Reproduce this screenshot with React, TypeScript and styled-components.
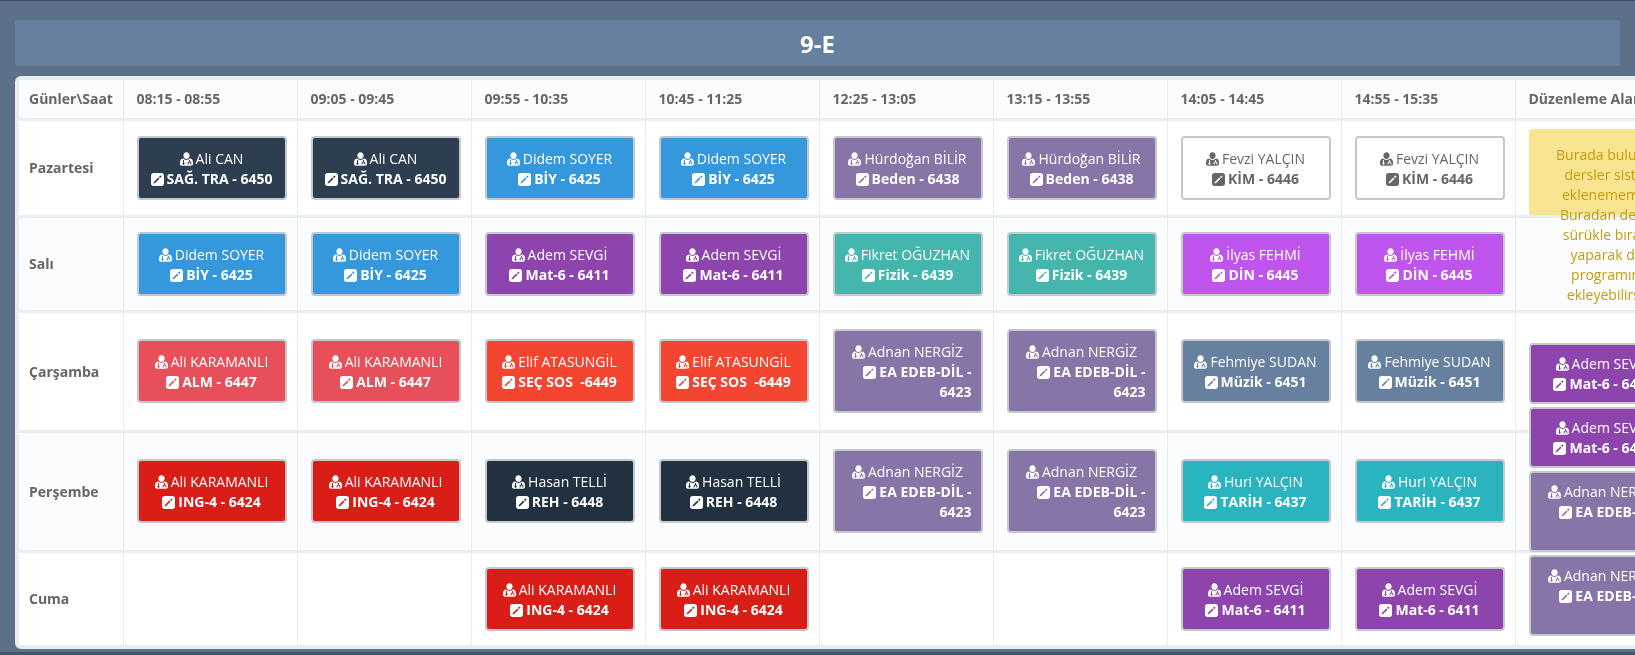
import React from "react";
import styled, { createGlobalStyle } from "styled-components";

const Global = createGlobalStyle`
  html, body { margin: 0; padding: 0; height: 100%; overflow: hidden; }
  body { background: #5c7089; font-family: "Open Sans", "Liberation Sans", sans-serif; }
`;

const Page = styled.div`
  box-sizing: border-box;
  width: 1635px;
  height: 655px;
  padding: 20px 0 0 15px;
  overflow: hidden;
  background: #5c7089;
  border-top: 1px solid #3f4f63;
  border-bottom: 3px solid #44566b;
  filter: blur(0.35px);
`;

const Heading = styled.h1`
  box-sizing: border-box;
  width: 1605px;
  height: 46px;
  margin: -1px 0 10px;
  padding-top: 1px;
  background: #67809f;
  border-radius: 3px;
  color: #fff;
  font-size: 24px;
  line-height: 46px;
  font-weight: 700;
  text-align: center;
`;

const Panel = styled.div`
  box-sizing: border-box;
  width: 1700px;
  border: 4px solid #e7ecf1;
  border-radius: 6px;
  background: #fff;
`;

const Table = styled.table`
  table-layout: fixed;
  width: 1690px;
  border-collapse: collapse;
  color: #666;
  font-size: 14px;
`;

const HeadCell = styled.th<{ $first?: boolean }>`
  box-sizing: border-box;
  height: 39px;
  padding: 0 0 0 ${(p) => (p.$first ? 10 : 13)}px;
  background: #fbfcfd;
  border-left: ${(p) => (p.$first ? 0 : 1)}px solid #e7ecf1;
  border-bottom: 3px solid #e7ecf1;
  text-align: left;
  white-space: nowrap;
  overflow: hidden;
  font-weight: 700;
`;

const Row = styled.tr<{ $height: number; $striped?: boolean; $last?: boolean }>`
  height: ${(p) => p.$height}px;
  & > td {
    background: ${(p) => (p.$striped ? "#fbfcfd" : "transparent")};
    ${(p) => (p.$last ? "border-bottom: 0;" : "")}
  }
`;

const DayCell = styled.td`
  padding: 0 0 0 10px;
  border-bottom: 3px solid #e7ecf1;
  font-weight: 700;
`;

const Cell = styled.td`
  padding: 0 10px 0 13px;
  border-left: 1px solid #e7ecf1;
  border-bottom: 3px solid #e7ecf1;
  vertical-align: middle;
`;

const NoteCell = styled(Cell)`
  vertical-align: top;
  padding-top: 8px;
`;

const StackCell = styled(Cell)`
  position: relative;
  vertical-align: top;
`;

const FillCell = styled(Cell)`
  padding: 0;
  vertical-align: top;
`;

/* block-level stripe: painted after the note's background, before its text */
const StripeFill = styled.div`
  height: 91px;
  background: #fbfcfd;
`;

const Lesson = styled.div<{ $bg: string; $fg?: string; $dense?: boolean }>`
  box-sizing: border-box;
  width: 150px;
  padding: ${(p) => (p.$dense ? "9.5px 9px 7.5px" : "11px 9px 9px")};
  background: ${(p) => p.$bg};
  border: 2px solid #c4c7cb;
  border-radius: 4px;
  color: ${(p) => p.$fg ?? "#fff"};
  font-size: 14px;
  line-height: 20px;
  text-align: center;
`;

const Name = styled.div`
  white-space: nowrap;
  svg { width: 13px; height: 14px; vertical-align: -2px; margin-right: 3px; }
`;

const Code = styled.div`
  display: inline-block;
  font-weight: 700;
  text-align: right;
  svg { width: 13px; height: 13px; vertical-align: -2px; margin-right: 3px; }
`;

const NoteHolder = styled.div`
  height: 0;
`;

const Note = styled.div`
  box-sizing: border-box;
  width: 172px;
  height: 183px;
  padding: 16px 15px;
  background: #f9e491;
  border-radius: 4px;
  color: #c29d0b;
  font-size: 14px;
  line-height: 20px;
  text-align: center;
  white-space: nowrap;
`;

const Stack = styled.div`
  position: absolute;
  left: 13px;
  top: 30px;
  display: flex;
  flex-direction: column;
  gap: 3px;
`;

const UserMd = () => (
  <svg viewBox="0 0 13 14" fill="currentColor" aria-hidden="true">
    <path d="M6.5 0.2c1.9 0 3.1 1.4 3.1 3.3 0 1.9-1.3 3.5-3.1 3.5S3.4 5.4 3.4 3.5C3.4 1.6 4.6 0.2 6.5 0.2Z" />
    <path
      fillRule="evenodd"
      d="M3.2 6.6c.7.7 1.9 1.3 3.3 1.3s2.6-.6 3.3-1.3c1.8.2 3.2 1.4 3.2 3.6v1.9c0 1-.8 1.7-2 1.7H2c-1.200 0-2-.7-2-1.700v-1.900c0-2.200 1.400-3.400 3.200-3.600ZM3 8.100v2.400a1.100 1.100 0 1 0 1 0V8.100H3Zm6 0v1.500c-.9.2-1.400 1-1.400 2v.9h1v-.9c0-.6.4-1.100.9-1.100s.9.500.9 1.100v.9h1v-.9c0-1-.5-1.800-1.400-2V8.100H9Z"
    />
  </svg>
);

const PenSquare = () => (
  <svg viewBox="0 0 14 14" fill="currentColor" aria-hidden="true">
    <path
      fillRule="evenodd"
      d="M3 0h8a3 3 0 0 1 3 3v8a3 3 0 0 1-3 3H3a3 3 0 0 1-3-3V3a3 3 0 0 1 3-3Zm6.800 2.900L8.600 4.100l1.300 1.300 1.200-1.200a.6.6 0 0 0 0-.8l-.5-.500a.6.6 0 0 0-.8 0ZM7.900 4.800 3.100 9.600 2.700 11.300l1.700-.4 4.800-4.800-1.300-1.300Z"
    />
  </svg>
);

type L = [string, string, string, string?];
const P: Record<string, L> = {
  can: ["Ali CAN", "SAĞ. TRA - 6450", "#2c3e50"],
  didem: ["Didem SOYER", "BİY - 6425", "#3598dc"],
  hurdogan: ["Hürdoğan BİLİR", "Beden - 6438", "#8775a7"],
  fevzi: ["Fevzi YALÇIN", "KİM - 6446", "#ffffff", "#666666"],
  adem: ["Adem SEVGİ", "Mat-6 - 6411", "#8e44ad"],
  fikret: ["Fikret OĞUZHAN", "Fizik - 6439", "#44b6ae"],
  ilyas: ["İlyas FEHMİ", "DİN - 6445", "#bf55ec"],
  alm: ["Ali KARAMANLI", "ALM - 6447", "#e7505a"],
  elif: ["Elif ATASUNGİL", "SEÇ SOS \u00a0-6449", "#f3452f"],
  adnan: ["Adnan NERGİZ", "EA EDEB-DİL - 6423", "#8775a7"],
  fehmiye: ["Fehmiye SUDAN", "Müzik - 6451", "#67809f"],
  ing: ["Ali KARAMANLI", "ING-4 - 6424", "#d91e18"],
  hasan: ["Hasan TELLİ", "REH - 6448", "#22313f"],
  huri: ["Huri YALÇIN", "TARİH - 6437", "#2ab4c0"],
};

const hours = [
  "08:15 - 08:55", "09:05 - 09:45", "09:55 - 10:35", "10:45 - 11:25",
  "12:25 - 13:05", "13:15 - 13:55", "14:05 - 14:45", "14:55 - 15:35",
];

const rows: { day: string; h: number; keys: (string | null)[] }[] = [
  { day: "Pazartesi", h: 97, keys: ["can", "can", "didem", "didem", "hurdogan", "hurdogan", "fevzi", "fevzi"] },
  { day: "Salı", h: 95, keys: ["didem", "didem", "adem", "adem", "fikret", "fikret", "ilyas", "ilyas"] },
  { day: "Çarşamba", h: 120, keys: ["alm", "alm", "elif", "elif", "adnan", "adnan", "fehmiye", "fehmiye"] },
  { day: "Perşembe", h: 120, keys: ["ing", "ing", "hasan", "hasan", "adnan", "adnan", "huri", "huri"] },
  { day: "Cuma", h: 94, keys: [null, null, "ing", "ing", null, null, "adem", "adem"] },
];

const Body = ({ l }: { l: L }) => (
  <>
    <Name><UserMd />{l[0]}</Name>
    <Code><PenSquare />{l[1]}</Code>
  </>
);

export default function App() {
  return (
    <Page>
      <Global />
      <Heading>9-E</Heading>
      <Panel>
        <Table>
          <colgroup>
            <col style={{ width: 104 }} />
            {hours.map((h) => <col key={h} style={{ width: 174 }} />)}
            <col />
          </colgroup>
          <thead>
            <tr>
              <HeadCell $first>Günler\Saat</HeadCell>
              {hours.map((h) => <HeadCell key={h}>{h}</HeadCell>)}
              <HeadCell>Düzenleme Alanı</HeadCell>
            </tr>
          </thead>
          <tbody>
            {rows.map((r, i) => (
              <Row key={r.day} $height={r.h} $striped={i % 2 === 1} $last={i === rows.length - 1}>
                <DayCell>{r.day}</DayCell>
                {r.keys.map((k, j) => (
                  <Cell key={j}>
                    {k && <Lesson $bg={P[k][2]} $fg={P[k][3]}><Body l={P[k]} /></Lesson>}
                  </Cell>
                ))}
                {i === 0 ? (
                  <NoteCell>
                    <NoteHolder>
                      <Note>
                        Burada bulunan e<br />dersler sisteme<br />eklenememiştir.<br />Buradan dersleri<br />sürükle bırak ile<br />yaparak dersi<br />programınıza<br />ekleyebilirsiniz
                      </Note>
                    </NoteHolder>
                  </NoteCell>
                ) : i === 1 ? (
                  <FillCell><StripeFill /></FillCell>
                ) : i === 2 ? (
                  <StackCell>
                    <Stack>
                      <Lesson $dense $bg={P.adem[2]}><Body l={P.adem} /></Lesson>
                      <Lesson $dense $bg={P.adem[2]}><Body l={P.adem} /></Lesson>
                      <Lesson $dense $bg={P.adnan[2]}><Body l={P.adnan} /></Lesson>
                      <Lesson $dense $bg={P.adnan[2]}><Body l={P.adnan} /></Lesson>
                    </Stack>
                  </StackCell>
                ) : (
                  <Cell />
                )}
              </Row>
            ))}
          </tbody>
        </Table>
      </Panel>
    </Page>
  );
}
